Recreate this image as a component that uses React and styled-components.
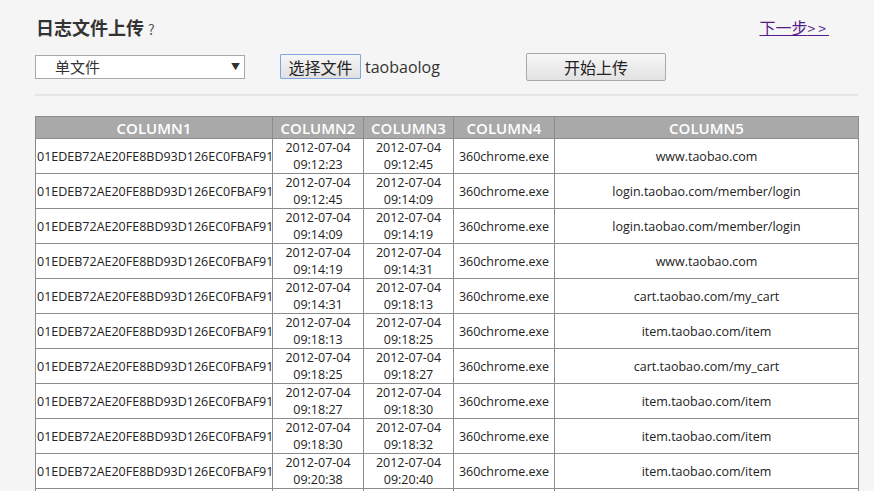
import React from 'react'
import styled, { createGlobalStyle } from 'styled-components'

const GlobalStyle = createGlobalStyle`
  html, body {
    margin: 0;
    padding: 0;
    background: #f5f5f5;
    font-family: "Open Sans", "Noto Sans", "Noto Sans CJK SC", sans-serif;
    color: #222;
  }
`

const Page = styled.div`
  padding: 16px 16px 0 35px;
  width: 823px;
`

const TopBar = styled.div`
  display: flex;
  justify-content: space-between;
  align-items: flex-end;
  height: 26px;
`

const Title = styled.h1`
  margin: 0;
  font-size: 18px;
  font-weight: bold;
  color: #333;
  font-family: "Noto Sans CJK SC", sans-serif;
  line-height: 26px;
  padding-left: 1px;
`

const Help = styled.span`
  font-size: 14px;
  font-weight: normal;
  color: #555;
  margin-left: 4px;
`

const NextLink = styled.a`
  color: #551a8b;
  font-size: 16px;
  font-family: "Noto Sans CJK SC", sans-serif;
  text-decoration: underline;
  margin-right: 29px;
  margin-bottom: 5px;
  line-height: 17px;
`

const Gt = styled.span`
  letter-spacing: 3px;
  font-size: 14px;
`

const Controls = styled.div`
  display: flex;
  align-items: center;
  margin-top: 11px;
  height: 27px;
`

const Select = styled.div`
  position: relative;
  box-sizing: border-box;
  width: 210px;
  height: 24px;
  border: 1px solid #a9a9a9;
  background: #fff;
  font-family: "Noto Sans CJK SC", sans-serif;
  font-size: 15px;
  line-height: 22px;
  padding-left: 19px;
  color: #333;
`

const Arrow = styled.span`
  position: absolute;
  right: 4px;
  top: 0;
  font-size: 9px;
  color: #333;
`

const FileBtn = styled.button`
  margin-left: 35px;
  height: 25px;
  width: 81px;
  border: 1px solid #7ea6e0;
  background: linear-gradient(#f6f6f6, #e0e0e0);
  font-family: "Noto Sans CJK SC", sans-serif;
  font-size: 16px;
  color: #222;
  padding: 0;
  border-radius: 1px;
`

const FileName = styled.span`
  margin-left: 4px;
  font-size: 16px;
  color: #333;
  width: 161px;
`

const UploadBtn = styled.button`
  height: 28px;
  width: 140px;
  border: 1px solid #a9a9a9;
  background: linear-gradient(#f7f7f7, #e2e2e2);
  font-family: "Noto Sans CJK SC", sans-serif;
  font-size: 16px;
  color: #222;
  border-radius: 2px;
  padding: 0;
`

const Rule = styled.hr`
  margin: 14px 0 0 0;
  border: 0;
  height: 2px;
  background: #e6e6e6;
`

const Table = styled.table`
  margin-top: 20px;
  width: 823px;
  border-collapse: collapse;
  background: #fff;
  font-size: 12.5px;
  table-layout: fixed;
`

const Th = styled.th`
  background: #a9a9a9;
  color: #fff;
  font-weight: 600;
  font-size: 15px;
  height: 21px;
  padding: 0;
  border: 1px solid #8c8c8c;
  line-height: 20px;
  width: ${p => p.$w}px;
`

const Td = styled.td`
  border: 1px solid #8c8c8c;
  height: 34px;
  padding: 0;
  text-align: ${p => (p.$left ? 'left' : 'center')};
  padding-left: ${p => (p.$left ? '1px' : '0')};
  line-height: 17px;
  color: #222;
  white-space: nowrap;
  overflow: hidden;
`

const rows = [
  ['09:12:23', '09:12:45', 'www.taobao.com'],
  ['09:12:45', '09:14:09', 'login.taobao.com/member/login'],
  ['09:14:09', '09:14:19', 'login.taobao.com/member/login'],
  ['09:14:19', '09:14:31', 'www.taobao.com'],
  ['09:14:31', '09:18:13', 'cart.taobao.com/my_cart'],
  ['09:18:13', '09:18:25', 'item.taobao.com/item'],
  ['09:18:25', '09:18:27', 'cart.taobao.com/my_cart'],
  ['09:18:27', '09:18:30', 'item.taobao.com/item'],
  ['09:18:30', '09:18:32', 'item.taobao.com/item'],
  ['09:20:38', '09:20:40', 'item.taobao.com/item'],
  ['09:20:40', '09:20:52', 'item.taobao.com/item'],
]

export default function App() {
  return (
    <>
      <GlobalStyle />
      <Page>
        <TopBar>
          <Title>
            日志文件上传<Help>?</Help>
          </Title>
          <NextLink href="#">
            下一步<Gt>&gt;&gt;</Gt>
          </NextLink>
        </TopBar>
        <Controls>
          <Select>
            单文件
            <Arrow>▼</Arrow>
          </Select>
          <FileBtn>选择文件</FileBtn>
          <FileName>taobaolog</FileName>
          <UploadBtn>开始上传</UploadBtn>
        </Controls>
        <Rule />
        <Table>
          <thead>
            <tr>
              <Th $w={236}>COLUMN1</Th>
              <Th $w={90}>COLUMN2</Th>
              <Th $w={89}>COLUMN3</Th>
              <Th $w={100}>COLUMN4</Th>
              <Th $w={303}>COLUMN5</Th>
            </tr>
          </thead>
          <tbody>
            {rows.map((r, i) => (
              <tr key={i}>
                <Td $left>01EDEB72AE20FE8BD93D126EC0FBAF91</Td>
                <Td>
                  2012-07-04
                  <br />
                  {r[0]}
                </Td>
                <Td>
                  2012-07-04
                  <br />
                  {r[1]}
                </Td>
                <Td>360chrome.exe</Td>
                <Td>{r[2]}</Td>
              </tr>
            ))}
          </tbody>
        </Table>
      </Page>
    </>
  )
}
